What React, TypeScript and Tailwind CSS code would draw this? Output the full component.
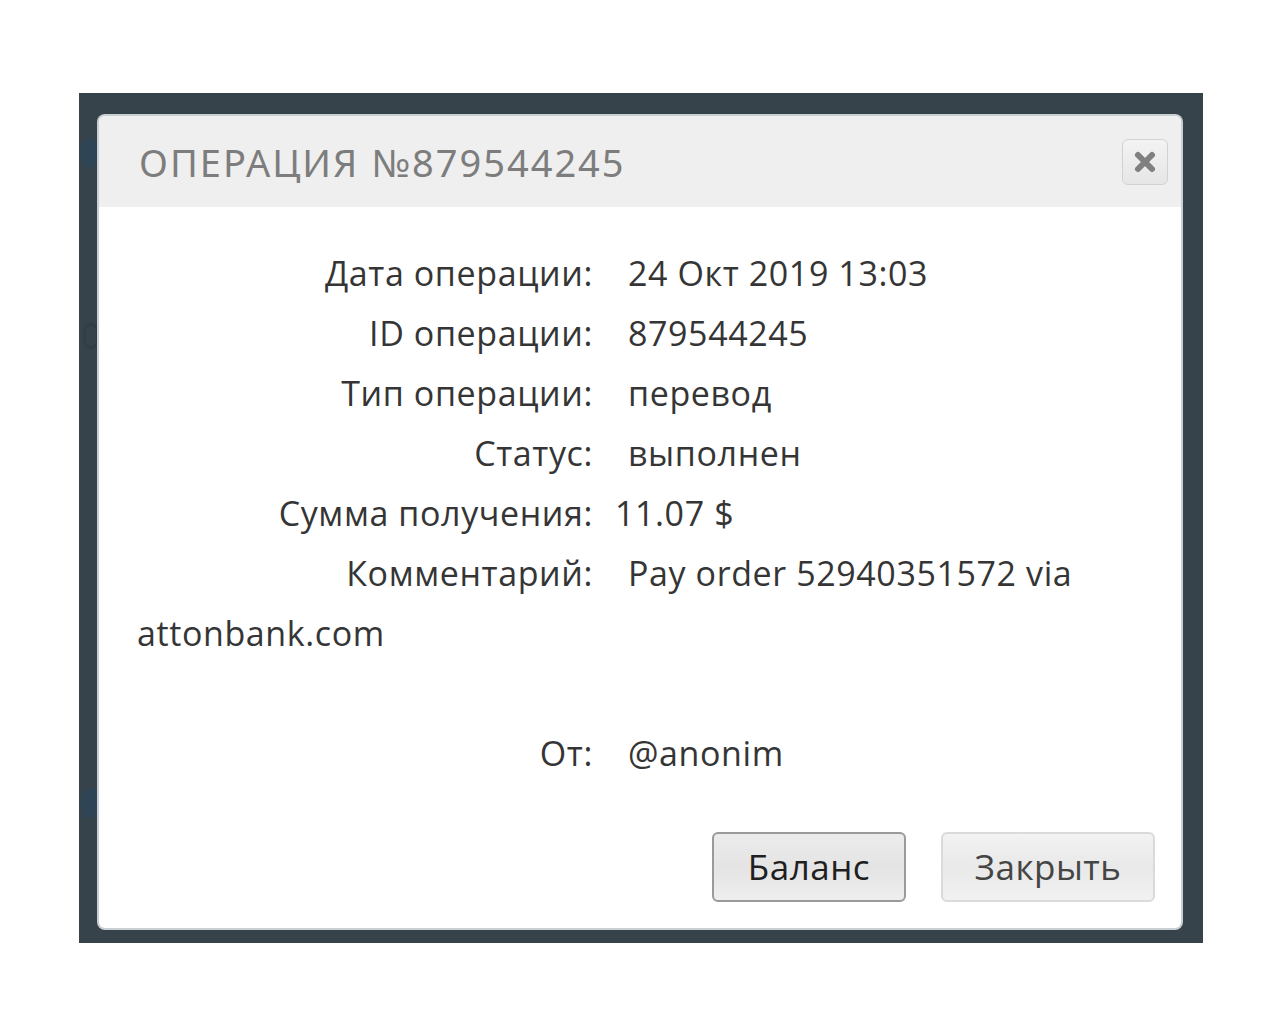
import React from "react";

const rows: { label: string; value: string; gap: string }[] = [
  { label: "Дата операции:", value: "24 Окт 2019 13:03", gap: "ml-[35px]" },
  { label: "ID операции:", value: "879544245", gap: "ml-[35px]" },
  { label: "Тип операции:", value: "перевод", gap: "ml-[35px]" },
  { label: "Статус:", value: "выполнен", gap: "ml-[35px]" },
  { label: "Сумма получения:", value: "11.07 $", gap: "ml-[22px]" },
];

export default function App() {
  return (
    <div className="min-h-[1024px] w-[1280px] bg-white pt-[93px] pl-[79px]">
      <div className="relative w-[1124px] h-[850px] bg-[#37434b] pt-[23px] pl-[20px]">
        {/* faint background ghosts */}
        <div className="absolute left-[2px] top-[45px] w-[20px] h-[30px] rounded-full bg-[#2f4455]" />
        <div className="absolute left-[4px] top-[230px] w-[16px] h-[26px] rounded-full border-[3px] border-[#323e46]" />
        <div className="absolute left-[2px] top-[695px] w-[20px] h-[30px] rounded-full bg-[#2f4455]" />
        <div
          className="relative w-[1082px] h-[812px] bg-white rounded-[6px] overflow-hidden shadow-[0_0_0_2px_#c9cfd3]"
          style={{ fontFamily: '"Open Sans", "Noto Sans", sans-serif' }}
        >
          <div className="h-[91px] bg-[#efefef] flex items-center pl-[40px] pr-[13px] justify-between">
            <div
              className="text-[38px] tracking-[2px] text-[#7d7d7d] leading-none"
              style={{ fontFamily: '"Noto Sans", "DejaVu Sans", sans-serif' }}
            >
              ОПЕРАЦИЯ №879544245
            </div>
            <button className="w-[46px] h-[46px] rounded-[6px] border border-[#d2d2d2] bg-gradient-to-b from-[#f3f3f3] to-[#e6e6e6] flex items-center justify-center">
              <svg width="24" height="24" viewBox="0 0 24 24">
                <path d="M5 5 L19 19 M19 5 L5 19" stroke="#808080" strokeWidth="6" strokeLinecap="round" />
              </svg>
            </button>
          </div>
          <div className="pt-[36px] pl-[38px] pr-[38px] text-[34px] tracking-[0.6px] leading-[60px] text-[#353535]">
            {rows.map((r) => (
              <div key={r.label}>
                <span className="inline-block w-[456px] text-right">{r.label}</span>
                <span className={r.gap}>{r.value}</span>
              </div>
            ))}
            <div>
              <span className="inline-block w-[456px] text-right">Комментарий:</span>
              <span className="ml-[35px]">Pay order 52940351572 via attonbank.com</span>
            </div>
            <div className="h-[60px]" />
            <div>
              <span className="inline-block w-[456px] text-right">От:</span>
              <span className="ml-[35px]">@anonim</span>
            </div>
          </div>
          <div className="absolute right-[26px] bottom-[26px] flex gap-[35px]">
            <button className="w-[194px] h-[70px] rounded-[6px] border-2 border-[#9a9a9a] bg-gradient-to-b from-[#ececec] via-[#e4e4e4] to-[#eeeeee] text-[35px] tracking-[0.5px] text-[#1f1f1f]">
              Баланс
            </button>
            <button className="w-[214px] h-[70px] rounded-[6px] border-2 border-[#dadada] bg-gradient-to-b from-[#f2f2f2] via-[#e9e9e9] to-[#f1f1f1] text-[35px] tracking-[0.5px] text-[#454545]">
              Закрыть
            </button>
          </div>
        </div>
      </div>
    </div>
  );
}
